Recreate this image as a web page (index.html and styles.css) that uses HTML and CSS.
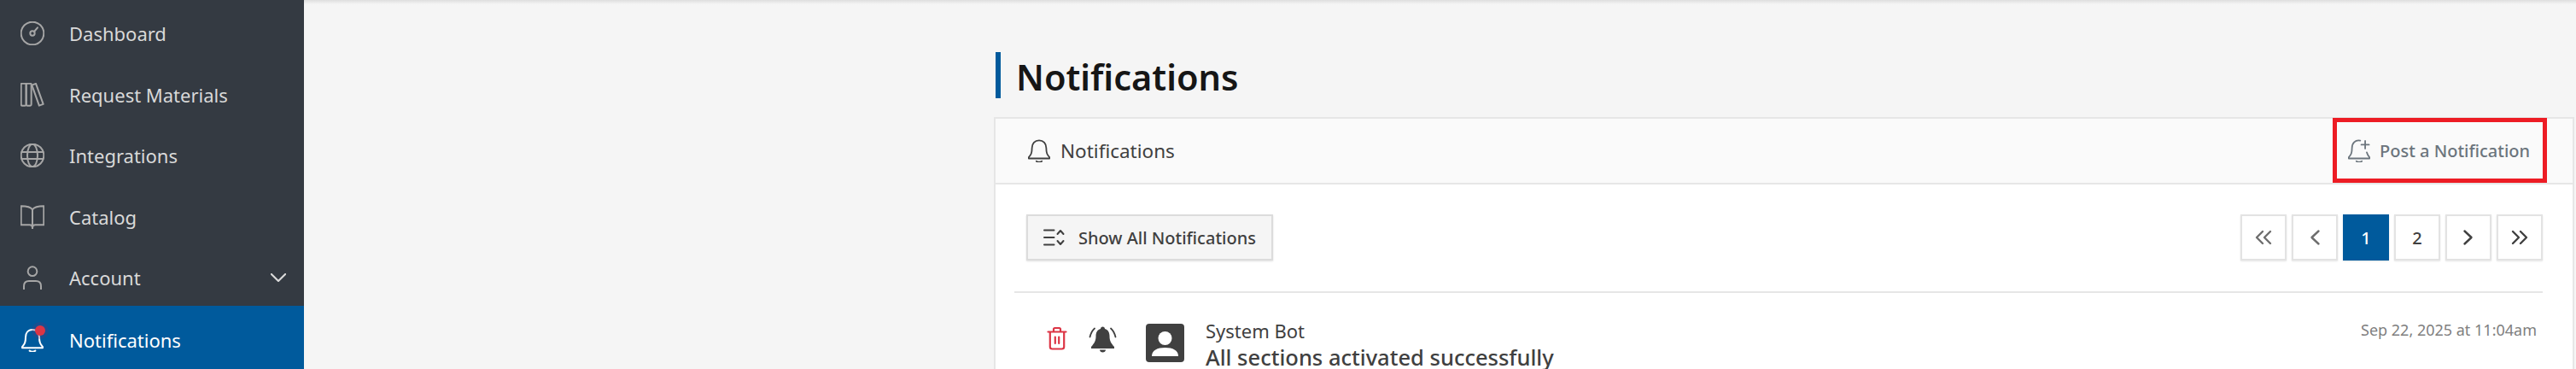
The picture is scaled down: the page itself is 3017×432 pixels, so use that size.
FILE: index.html
```html
<!DOCTYPE html>
<html lang="en">
<head>
  <meta charset="UTF-8">
  <title>Notifications</title>
  <link rel="stylesheet" href="styles.css">
</head>
<body>
  <nav class="sidebar">
    <a class="nav-item">
      <svg class="nav-icon" viewBox="1.5 1.5 21 21"><circle cx="12" cy="12" r="10"/><circle cx="12" cy="12" r="2"/><path d="M13.500 10.500l3-3.500"/></svg>
      <span>Dashboard</span>
    </a>
    <a class="nav-item">
      <svg class="nav-icon" viewBox="1.5 1.5 21 21"><rect x="2" y="2" width="4.500" height="19.500" rx="1"/><rect x="6.500" y="2" width="4.500" height="19.500" rx="1"/><path d="M11.500 3.500l3.500-1.300 6.500 18-3.600 1.300z"/></svg>
      <span>Request Materials</span>
    </a>
    <a class="nav-item">
      <svg class="nav-icon" viewBox="1.5 1.5 21 21"><circle cx="12" cy="12" r="10"/><ellipse cx="12" cy="12" rx="4.500" ry="10"/><path d="M2.500 9h19M2.500 15h19"/></svg>
      <span>Integrations</span>
    </a>
    <a class="nav-item">
      <svg class="nav-icon" viewBox="1.5 1.5 21 21"><path d="M12 5.500C10.500 3.500 8 2.500 2 2.500V19h7.500c1.500 0 2.500 .5 2.500 2.500 0-2 1-2.500 2.500-2.500H22V2.500c-6 0-8.500 1-10 3zM12 5.500v17"/></svg>
      <span>Catalog</span>
    </a>
    <a class="nav-item">
      <svg class="nav-icon" viewBox="1.5 1.5 21 21"><circle cx="12" cy="6.500" r="4"/><path d="M4.500 22v-2.500c0-3 2-4.500 4.500-4.500h6c2.500 0 4.500 1.500 4.500 4.500V22"/></svg>
      <span>Account</span>
      <svg class="nav-caret" viewBox="2 6 20 11"><path d="M3 7l9 9 9-9"/></svg>
    </a>
    <a class="nav-item active">
      <span class="nav-bell">
        <svg class="nav-icon" viewBox="1.5 1.5 21 21"><path d="M12 3c-4 0-6 3-6 6.500 0 5-1 6-3 8.500v1h18v-1c-2-2.500-3-3.500-3-8.500C18 6 16 3 12 3zM9.500 21.500c1.500 1 3.500 1 5 0"/></svg>
        <i class="nav-dot"></i>
      </span>
      <span>Notifications</span>
    </a>
  </nav>

  <main class="main">
    <h1 class="page-title">Notifications</h1>
    <section class="card">
      <header class="card-head">
        <div class="card-title">
          <svg class="head-icon" viewBox="2 1.5 20 21"><path d="M12 2.500c-4 0-6.500 3-6.500 7 0 5-1 6-3 8.500v1h19v-1c-2-2.500-3-3.500-3-8.500 0-4-2.500-7-6.500-7zM9.500 21.500c1.500 1 3.500 1 5 0"/></svg>
          <span>Notifications</span>
        </div>
        <a class="post-link">
          <svg class="head-icon" viewBox="2 1.5 20 21"><path d="M13 2.700C8.500 1.800 5.500 5 5.500 9.500c0 5-1 6-3 8.500v1h19v-1c-1.300-1.600-2-2.500-2.500-4.500M9.500 21.500c1.500 1 3.500 1 5 0M17.500 3v7M14 6.500h7"/></svg>
          <span>Post a Notification</span>
        </a>
      </header>
      <div class="card-body">
        <div class="toolbar">
          <button class="show-btn">
            <svg class="show-icon" viewBox="0 0 26 20"><path d="M1 1.500h11.500M1 10h11.500M1 18.500h11.500M16.500 6L20 2l3.500 4M16.500 14l3.500 4 3.500-4"/></svg>
            <span>Show All Notifications</span>
          </button>
          <div class="pager">
            <button class="page-btn muted"><svg viewBox="0 0 24 24"><path d="M11 5l-7 7 7 7M20 5l-7 7 7 7"/></svg></button>
            <button class="page-btn muted"><svg viewBox="0 0 24 24"><path d="M16.500 4.500L8.500 12l8 7.500"/></svg></button>
            <button class="page-btn current">1</button>
            <button class="page-btn">2</button>
            <button class="page-btn"><svg viewBox="0 0 24 24"><path d="M7.500 4.500l8 7.500-8 7.500"/></svg></button>
            <button class="page-btn"><svg viewBox="0 0 24 24"><path d="M4 5l7 7-7 7M13 5l7 7-7 7"/></svg></button>
          </div>
        </div>
        <article class="note">
          <svg class="trash" viewBox="0 0 24 28"><path d="M1.500 6.500h21M3.800 6.500v17.500c0 1.500 1 2.500 2.500 2.500h11.400c1.500 0 2.500-1 2.500-2.500V6.500M8 6V3.500c0-1 .5-1.500 1.500-1.500h5c1 0 1.500 .5 1.500 1.500V6M9.800 12.500v7.500M14.200 12.500v7.500"/></svg>
          <svg class="ring" viewBox="0 0 33 32"><path d="M16.500 1.500c1.500 0 2.500 1 2.500 2.500 4 1 5.500 4.500 5.500 8.500 0 5 1.500 8 5.500 12.500v2H3v-2c4-4.500 5.500-7.500 5.500-12.500 0-4 1.500-7.500 5.500-8.500 0-1.500 1-2.500 2.500-2.500zM13 28.500h7c0 4-7 4-7 0z"/><path class="ring-arc" d="M7 3.500C4 6 2.500 9.500 1.500 13.500M26 3.500c3 2.500 4.500 6 5.500 10"/></svg>
          <span class="avatar"><svg viewBox="0 0 45 45"><rect width="45" height="45" rx="4"/><circle class="avatar-fg" cx="22.500" cy="17" r="8"/><path class="avatar-fg" d="M7 38c0-7 6.500-10 15.500-10S38 31 38 38z"/></svg></span>
          <div class="note-text">
            <div class="note-from">System Bot</div>
            <div class="note-title">All sections activated successfully</div>
          </div>
          <time class="note-date">Sep 22, 2025 at 11:04am</time>
        </article>
      </div>
    </section>
  </main>
</body>
</html>
```

FILE: styles.css
```css
html, body {
  height: 432px;
  overflow: hidden;
}
body {
  margin: 0;
  display: flex;
  font-family: 'Noto Sans', 'Open Sans', sans-serif;
  background: #f5f5f5;
  color: #404040;
}
svg {
  fill: none;
  stroke: currentColor;
  stroke-linecap: round;
  stroke-linejoin: round;
}

.sidebar {
  width: 356px;
  flex: none;
  padding-top: 3.5px;
  background: #343a42;
  color: #d9d9d9;
  font-size: 22px;
}
.nav-item {
  display: flex;
  align-items: center;
  height: 71.5px;
  padding: 0 21px 0 24px;
}
.nav-icon {
  width: 28px;
  height: 28px;
  margin-right: 29px;
  color: #a6a6a6;
  stroke-width: 1.5;
  flex: none;
}
.nav-caret {
  width: 18px;
  height: 10px;
  margin-left: auto;
  stroke-width: 2.4;
}
.nav-item.active {
  margin-top: -3.5px;
  padding-top: 3.5px;
  height: 74px;
  background: #005a9c;
  color: #fff;
}
.nav-item.active .nav-icon {
  color: #fff;
}
.nav-bell {
  position: relative;
  display: flex;
}
.nav-dot {
  position: absolute;
  top: -3px;
  left: 17px;
  width: 12px;
  height: 12px;
  border-radius: 50%;
  background: #dc3545;
  box-shadow: 0 0 0 4px rgba(80, 60, 120, .3);
}

.main {
  flex: 1;
  padding: 61px 2px 0 808px;
  background: linear-gradient(#dedede, #f5f5f5 5px);
}
.page-title {
  height: 54px;
  margin: 0 0 22px 2px;
  padding-left: 18px;
  border-left: 6px solid #005a9c;
  color: #161616;
  font-size: 41.5px;
  font-weight: 600;
  line-height: 58px;
}
.card {
  border: 2px solid #e6e6e6;
  border-bottom: 0;
  background: #fff;
}
.card-head {
  display: flex;
  align-items: center;
  justify-content: space-between;
  height: 75px;
  padding: 0 30px 0 38px;
  border-bottom: 2px solid #e6e6e6;
  background: #fafafa;
  font-size: 22.5px;
}
.card-title {
  display: flex;
  align-items: center;
  gap: 12px;
}
.head-icon {
  width: 26px;
  height: 27px;
  stroke-width: 1.4;
}
.post-link {
  display: flex;
  align-items: center;
  gap: 11px;
  width: 251px;
  height: 76px;
  margin-top: -1px;
  padding-left: 13px;
  box-sizing: border-box;
  border: 5px solid #ed1c24;
  color: #6c757d;
  font-size: 20px;
  font-weight: 500;
}

.card-body {
  padding: 35px 35px 0 22px;
}
.toolbar {
  display: flex;
  justify-content: space-between;
  padding: 0 0 36px 14px;
  border-bottom: 2px solid #e6e6e6;
}
.show-btn {
  display: flex;
  align-items: center;
  gap: 15px;
  width: 289px;
  height: 54px;
  padding: 0 0 0 18px;
  border: 2px solid #dcdcdc;
  background: #f5f5f5;
  box-shadow: 0 1px 2px #0000001f;
  color: #404040;
  font: 500 20px 'Noto Sans', sans-serif;
}
.show-icon {
  width: 26px;
  height: 20px;
  stroke-width: 2;
}
.pager {
  display: flex;
  gap: 6px;
}
.page-btn {
  display: flex;
  align-items: center;
  justify-content: center;
  width: 54px;
  height: 54px;
  padding: 0;
  border: 2px solid #e3e3e3;
  background: #fff;
  box-shadow: 0 1px 2px #0000001a;
  color: #404040;
  font: 500 20px 'Noto Sans', sans-serif;
}
.page-btn svg {
  width: 24px;
  height: 24px;
  stroke-width: 2.4;
}
.page-btn.muted {
  color: #6e6e6e;
}
.page-btn.current {
  border-color: #005a9c;
  background: #005a9c;
  color: #fff;
}

.note {
  display: flex;
  align-items: flex-start;
  padding: 30px 7px 0 38px;
}
.trash {
  width: 24px;
  height: 28px;
  margin: 9px 25px 0 0;
  color: #dc3545;
  stroke-width: 2.2;
  flex: none;
}
.ring {
  width: 33px;
  height: 32px;
  margin: 8px 34px 0 0;
  color: #404040;
  flex: none;
}
.ring path {
  fill: currentColor;
  stroke: none;
}
.ring .ring-arc {
  fill: none;
  stroke: currentColor;
  stroke-width: 1.8;
}
.avatar {
  display: flex;
  margin: 6px 25px 0 0;
}
.avatar svg {
  width: 45px;
  height: 45px;
  fill: #404040;
  stroke: none;
}
.avatar .avatar-fg {
  fill: #fff;
}
.note-text {
  flex: 1;
}
.note-from {
  font-size: 22px;
  line-height: 28px;
}
.note-title {
  font-size: 25.5px;
  font-weight: 500;
  line-height: 35px;
}
.note-date {
  color: #808080;
  font-size: 18px;
  line-height: 26px;
}
```
